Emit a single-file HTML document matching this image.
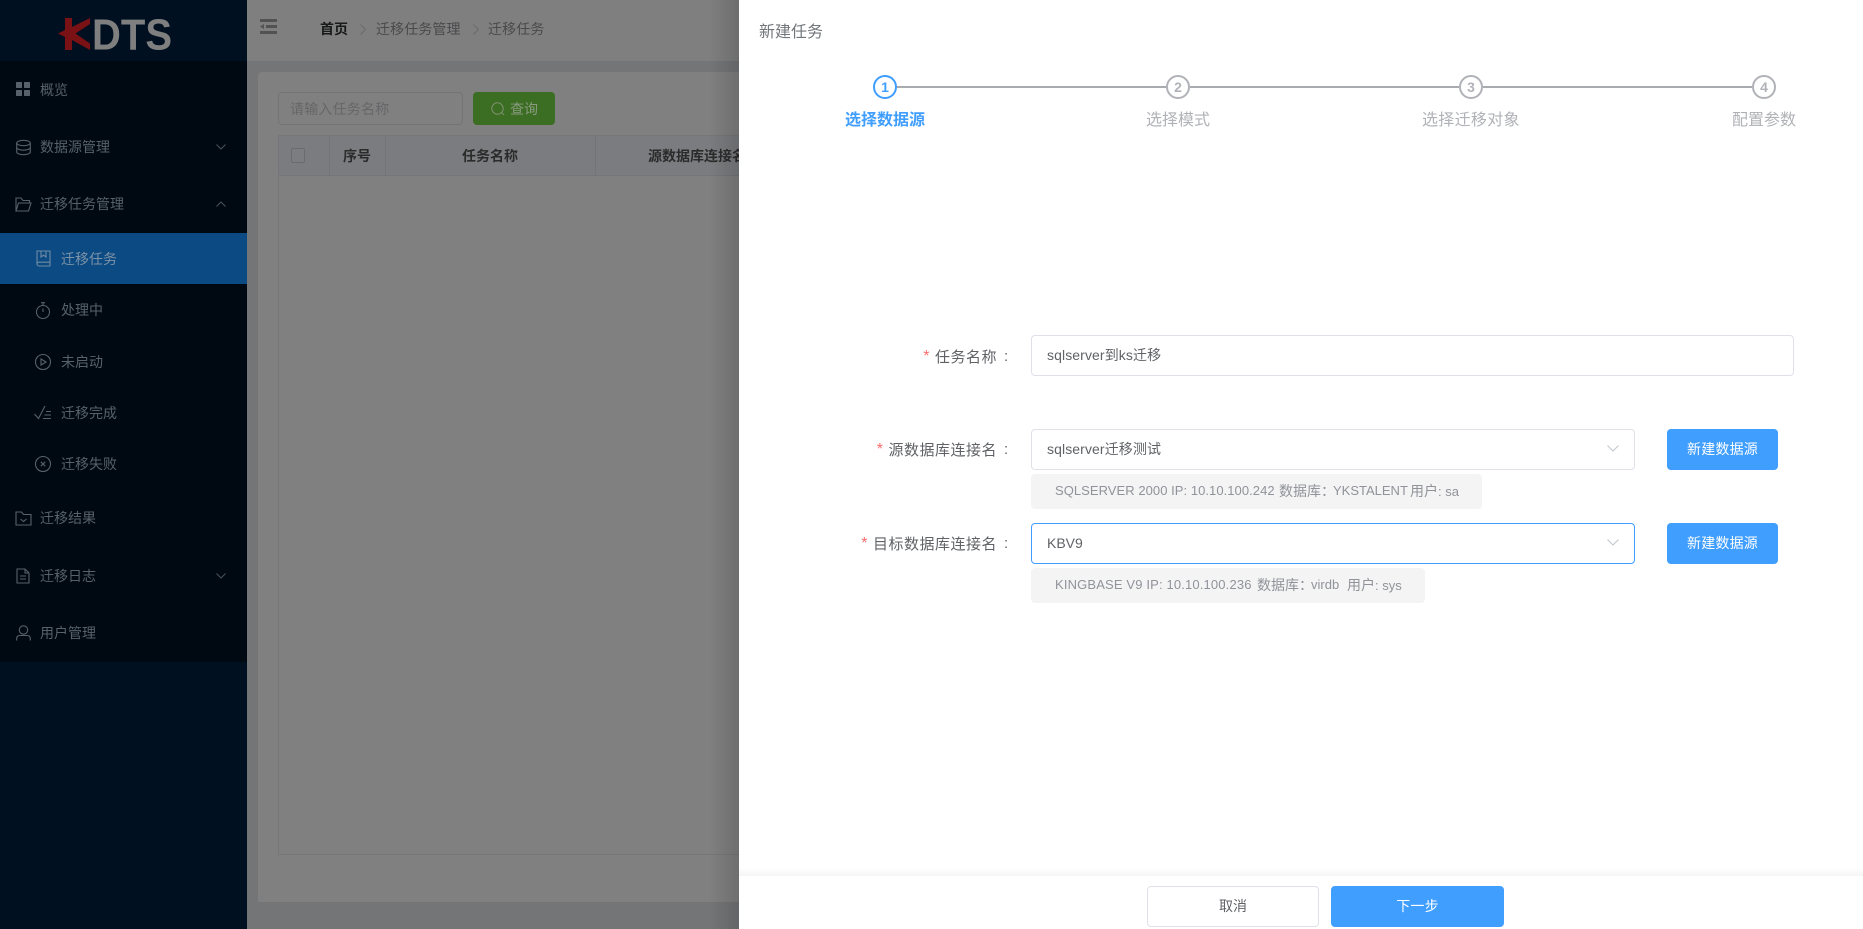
<!DOCTYPE html>
<html lang="zh">
<head>
<meta charset="utf-8">
<title>KDTS</title>
<style>
html,body{margin:0;padding:0}
body{width:1863px;height:929px;position:relative;overflow:hidden;background:#747577;font-family:"Liberation Sans","Noto Sans CJK SC",sans-serif;font-size:14px}
.a{position:absolute}
.t{position:absolute;white-space:nowrap;line-height:20px;height:20px}
svg{position:absolute;overflow:visible}
.m{color:#57616b}
.ic{fill:none;stroke:#57616b;stroke-width:1.1}
.ch{fill:none;stroke:#48525c;stroke-width:1}
.sel{position:absolute;left:1031px;width:602px;height:39px;border:1px solid #dfe1e8;border-radius:4px;background:#fff}
.box{position:absolute;left:1031px;background:#f4f4f5;border-radius:4px;height:35px}
.btn{position:absolute;background:#409eff;color:#fff;border-radius:4px;text-align:center;line-height:41px;height:41px}
.lb{color:#606266;font-size:15px;letter-spacing:.5px;text-align:right;right:866px}
.lb i{color:#f56c6c;font-style:normal;font-size:16px;margin-right:5px;position:relative;top:-1px}
.cl{color:#606266;left:1004px;font-size:15px;font-family:"Liberation Sans",sans-serif}
.g{font-size:13px;color:#909399}
.gc{font-size:14px;color:#909399}
</style>
</head>
<body>
<!-- sidebar -->
<div class="a" style="left:0;top:0;width:247px;height:929px;background:#001021"></div>
<div class="a" style="left:0;top:61px;width:247px;height:601px;background:#000911"></div>
<div class="a" style="left:0;top:233px;width:247px;height:51px;background:#0b4a82"></div>
<svg style="left:0;top:0" width="247" height="61">
<polygon fill="#7a1114" points="58,33.5 65,30 65,18 72,18 72,27 90,18 90,24 75.500,33.500 90,43.500 90,50 72,40 72,50 65,50 65,37"/>
<text x="92" y="49.5" font-family="Liberation Sans" font-weight="700" font-size="44" fill="#7f7f7f" textLength="80" lengthAdjust="spacingAndGlyphs">DTS</text>
</svg>

<svg style="left:16px;top:82px" width="14" height="14"><g fill="#57616b"><rect width="6" height="6" rx=".5"/><rect x="8" width="6" height="6" rx=".5"/><rect y="8" width="6" height="6" rx=".5"/><rect x="8" y="8" width="6" height="6" rx=".5"/></g></svg>
<div class="t m" style="left:40px;top:80px">概览</div>

<svg class="ic" style="left:16px;top:140px" width="15" height="15"><ellipse cx="7.5" cy="3" rx="6.8" ry="2.7"/><path d="M.7 3v9c0 1.5 3 2.7 6.8 2.7s6.8-1.200 6.800-2.700V3M.7 7.500c0 1.500 3 2.700 6.800 2.700s6.800-1.200 6.800-2.700"/></svg>
<div class="t m" style="left:40px;top:137px">数据源管理</div>
<svg class="ch" style="left:216px;top:144px" width="10" height="6"><path d="M.5.5l4.500 4.500 4.500-4.500"/></svg>

<svg class="ic" style="left:15px;top:197px" width="17" height="15"><path d="M1 14V1h5l2 2.500h6.500V6M1 14l2.500-8H16l-2.500 8z"/></svg>
<div class="t m" style="left:40px;top:194px">迁移任务管理</div>
<svg class="ch" style="left:216px;top:201px" width="10" height="6"><path d="M.5 5.500l4.500-4.500 4.500 4.500"/></svg>

<svg style="left:36px;top:250px;stroke:#6f8aa3;fill:none;stroke-width:1.1" width="15" height="17"><path d="M1 14V1h13v15H3a2 2 0 0 1-2-2zm0 0a2 2 0 0 1 2-1.800h11M5 1v6l2.500-1.800L10 7V1"/></svg>
<div class="t" style="left:61px;top:249px;color:#7d93a8">迁移任务</div>

<svg class="ic" style="left:36px;top:302px" width="15" height="17"><circle cx="7" cy="10" r="6.500"/><path d="M7 6.500V10M5 .7h4M7 .7v3"/></svg>
<div class="t m" style="left:61px;top:300px">处理中</div>

<svg class="ic" style="left:35px;top:354px" width="16" height="16"><circle cx="8" cy="8" r="7.500"/><path d="M6 5l5 3-5 3z"/></svg>
<div class="t m" style="left:61px;top:352px">未启动</div>

<svg class="ic" style="left:34px;top:405px" width="18" height="15"><path d="M.5 9l4 4.500L11 1M12 6.500h5M10.500 10h6.500M9 13.500h8"/></svg>
<div class="t m" style="left:61px;top:403px">迁移完成</div>

<svg class="ic" style="left:35px;top:456px" width="16" height="16"><circle cx="8" cy="8" r="7.500"/><path d="M5.800 5.800l4.400 4.400M10.200 5.800l-4.400 4.400"/></svg>
<div class="t m" style="left:61px;top:454px">迁移失败</div>

<svg class="ic" style="left:15px;top:511px" width="17" height="15"><path d="M1 14V1h5.500l2 2.500H16V14zM5.500 8l3 2.500 3-2.500"/></svg>
<div class="t m" style="left:40px;top:508px">迁移结果</div>

<svg class="ic" style="left:16px;top:568px" width="14" height="16"><path d="M1 15V1h8l4 4v10zM9 1v4h4M4 8h6M4 11h6"/></svg>
<div class="t m" style="left:40px;top:566px">迁移日志</div>
<svg class="ch" style="left:216px;top:573px" width="10" height="6"><path d="M.5.5l4.500 4.500 4.500-4.500"/></svg>

<svg class="ic" style="left:16px;top:625px" width="15" height="16"><circle cx="7.500" cy="5" r="4.200"/><path d="M.7 15.500v-2c0-2 1.500-3 3.500-3h6.600c2 0 3.500 1 3.500 3v2"/></svg>
<div class="t m" style="left:40px;top:623px">用户管理</div>

<!-- header -->
<div class="a" style="left:247px;top:0;width:492px;height:61px;background:#7f7f7f"></div>
<svg style="left:260px;top:19px" width="17" height="15"><g fill="#525252"><rect x="0" y="0" width="17" height="3"/><rect x="6" y="6" width="11" height="3"/><rect x="0" y="12" width="17" height="3"/><polygon points="0,7.500 4,5 4,10"/></g></svg>
<div class="t" style="left:320px;top:19px;font-weight:700;color:#181919">首页</div>
<svg style="left:360px;top:24px;fill:none;stroke:#6a6a6c;stroke-width:1" width="6" height="11"><path d="M.5.500l5 5-5 5"/></svg>
<div class="t" style="left:376px;top:19px;color:#4a4a4c;letter-spacing:.1px">迁移任务管理</div>
<svg style="left:473px;top:24px;fill:none;stroke:#6a6a6c;stroke-width:1" width="6" height="11"><path d="M.5.500l5 5-5 5"/></svg>
<div class="t" style="left:488px;top:19px;color:#4a4a4c;letter-spacing:.1px">迁移任务</div>

<!-- card -->
<div class="a" style="left:258px;top:72px;width:481px;height:830px;background:#808080;border-radius:4px 0 0 0"></div>
<div class="a" style="left:278px;top:92px;width:183px;height:31px;border:1px solid #747477;border-radius:4px"></div>
<div class="t" style="left:290px;top:99px;color:#666668;letter-spacing:.2px">请输入任务名称</div>
<div class="a" style="left:473px;top:92px;width:82px;height:33px;background:#3b6e22;border-radius:4px"></div>
<svg style="left:491px;top:102px;fill:none;stroke:#7e9070;stroke-width:1" width="14" height="14"><circle cx="6.500" cy="6.500" r="5.700"/><path d="M10.500 10.500l2.500 2.500"/></svg>
<div class="t" style="left:510px;top:99px;color:#8a9a80">查询</div>

<!-- table -->
<div class="a" style="left:278px;top:135px;width:461px;height:718px;border:1px solid #767779;border-right:0"></div>
<div class="a" style="left:279px;top:136px;width:460px;height:39px;background:#7a7c7f;border-bottom:1px solid #747577"></div>
<div class="a" style="left:329px;top:136px;width:1px;height:39px;background:#737477"></div>
<div class="a" style="left:385px;top:136px;width:1px;height:39px;background:#737477"></div>
<div class="a" style="left:595px;top:136px;width:1px;height:39px;background:#737477"></div>
<div class="a" style="left:291px;top:148px;width:12px;height:13px;border:1px solid #6a6b6f;border-radius:2px;background:#7c7d80"></div>
<div class="t" style="left:343px;top:146px;font-weight:700;color:#2b2b2b">序号</div>
<div class="t" style="left:462px;top:146px;font-weight:700;color:#2b2b2b">任务名称</div>
<div class="t" style="left:648px;top:146px;font-weight:700;color:#2b2b2b">源数据库连接名称</div>

<!-- drawer shadow -->
<div class="a" style="left:709px;top:0;width:30px;height:929px;background:linear-gradient(to right,rgba(0,0,0,0),rgba(0,0,0,.14))"></div>

<!-- drawer -->
<div class="a" style="left:739px;top:0;width:1124px;height:929px;background:#fff;overflow:hidden"></div>
<div class="t" style="left:759px;top:23px;font-size:16px;color:#72767b">新建任务</div>

<div class="a" style="left:897px;top:86px;width:269px;height:2px;background:#a8abb0"></div>
<div class="a" style="left:1190px;top:86px;width:269px;height:2px;background:#a8abb0"></div>
<div class="a" style="left:1483px;top:86px;width:269px;height:2px;background:#a8abb0"></div>

<div class="a" style="left:873px;top:75px;width:20px;height:20px;border:2px solid #409eff;border-radius:50%;color:#409eff;font-weight:700;text-align:center;line-height:20px">1</div>
<div class="a" style="left:1166px;top:75px;width:20px;height:20px;border:2px solid #b0b2b7;border-radius:50%;color:#b0b2b7;font-weight:700;text-align:center;line-height:20px">2</div>
<div class="a" style="left:1459px;top:75px;width:20px;height:20px;border:2px solid #b0b2b7;border-radius:50%;color:#b0b2b7;font-weight:700;text-align:center;line-height:20px">3</div>
<div class="a" style="left:1752px;top:75px;width:20px;height:20px;border:2px solid #b0b2b7;border-radius:50%;color:#b0b2b7;font-weight:700;text-align:center;line-height:20px">4</div>

<div class="t" style="left:845px;top:110px;font-size:16px;line-height:22px;height:22px;font-weight:700;color:#409eff">选择数据源</div>
<div class="t" style="left:1146px;top:110px;font-size:16px;line-height:22px;height:22px;color:#b0b2b7">选择模式</div>
<div class="t" style="left:1422px;top:110px;font-size:16px;line-height:22px;height:22px;color:#b0b2b7;letter-spacing:.3px">选择迁移对象</div>
<div class="t" style="left:1732px;top:110px;font-size:16px;line-height:22px;height:22px;color:#b0b2b7">配置参数</div>

<!-- form -->
<div class="t lb" style="top:348px"><i>*</i>任务名称</div>
<div class="t cl" style="top:347px">:</div>
<div class="sel" style="top:335px;width:761px"></div>
<div class="t" style="left:1047px;top:345px;color:#606266;letter-spacing:.1px">sqlserver到ks迁移</div>

<div class="t lb" style="top:441px"><i>*</i>源数据库连接名</div>
<div class="t cl" style="top:440px">:</div>
<div class="sel" style="top:429px"></div>
<div class="t" style="left:1047px;top:439px;color:#606266;letter-spacing:.1px">sqlserver迁移测试</div>
<svg style="left:1607px;top:445px;fill:none;stroke:#c0c4cc;stroke-width:1" width="12" height="7"><path d="M.5.500L6 6l5.500-5.500"/></svg>
<div class="btn" style="left:1667px;top:429px;width:111px;letter-spacing:.2px">新建数据源</div>
<div class="box" style="top:474px;width:451px"></div>
<div class="t g" style="left:1055px;top:481px;letter-spacing:.05px">SQLSERVER 2000 IP: 10.10.100.242</div>
<div class="t gc" style="left:1279px;top:481px">数据库：</div>
<div class="t g" style="left:1333px;top:481px">YKSTALENT</div>
<div class="t gc" style="left:1410px;top:481px">用户<span class="g">: sa</span></div>

<div class="t lb" style="top:535px"><i>*</i>目标数据库连接名</div>
<div class="t cl" style="top:534px">:</div>
<div class="sel" style="top:523px;border-color:#409eff"></div>
<div class="t" style="left:1047px;top:533px;color:#606266">KBV9</div>
<svg style="left:1607px;top:539px;fill:none;stroke:#c0c4cc;stroke-width:1" width="12" height="7"><path d="M.5.500L6 6l5.500-5.500"/></svg>
<div class="btn" style="left:1667px;top:523px;width:111px;letter-spacing:.2px">新建数据源</div>
<div class="box" style="top:568px;width:394px"></div>
<div class="t g" style="left:1055px;top:575px;letter-spacing:.15px">KINGBASE V9 IP: 10.10.100.236</div>
<div class="t gc" style="left:1257px;top:575px">数据库：</div>
<div class="t g" style="left:1311px;top:575px">virdb</div>
<div class="t gc" style="left:1347px;top:575px">用户<span class="g">: sys</span></div>

<!-- footer -->
<div class="a" style="left:739px;top:868px;width:1124px;height:8px;background:linear-gradient(to bottom,#fff,#f5f5f6)"></div>
<div class="a" style="left:1147px;top:886px;width:170px;height:39px;border:1px solid #dfe1e8;border-radius:4px;text-align:center;line-height:39px;color:#606266">取消</div>
<div class="btn" style="left:1331px;top:886px;width:173px;letter-spacing:.2px">下一步</div>
</body>
</html>
